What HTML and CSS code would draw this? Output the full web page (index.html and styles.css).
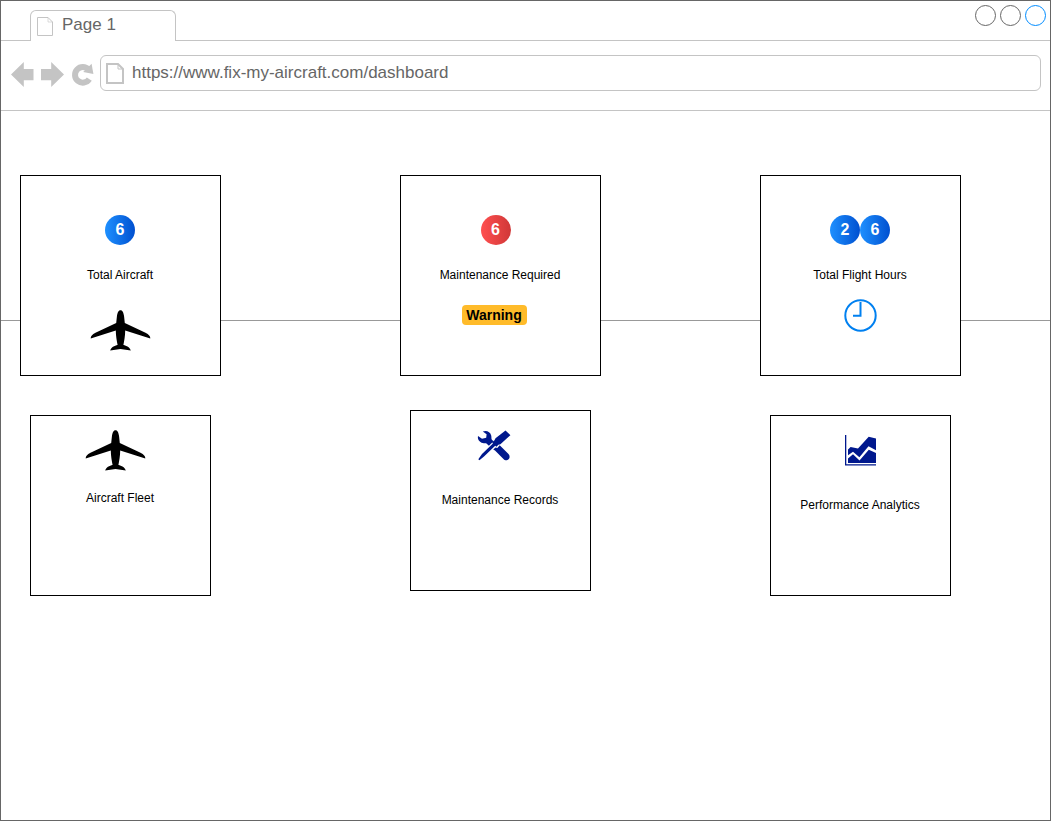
FILE: index.html
```html
<!DOCTYPE html>
<html lang="en">
<head>
<meta charset="utf-8">
<title>Page 1</title>
<link rel="stylesheet" href="styles.css">
</head>
<body>
<svg class="defs" width="0" height="0">
  <symbol id="plane" viewBox="-.5 0 61 41">
    <path d="M30 .3C32.2 .3 33 2.8 33.6 6.5L34.3 13L55 22.8Q60 25.3 59.8 28.4L34.7 20.4C34.7 26 33.6 31 32.9 35C36 35.5 39.5 37.5 40.3 40.5L30 39L19.7 40.5C20.5 37.5 24 35.5 27.1 35C26.4 31 25.3 26 25.3 20.4L.2 28.4Q0 25.3 5 22.8L25.7 13L26.4 6.5C27 2.8 27.8 .3 30 .3Z"/>
  </symbol>
</svg>
<div class="browser">
  <header class="tabs">
    <div class="tab">
      <svg class="tab-icon" width="16" height="19" viewBox="0 0 16 19" fill="none" stroke="#c4c4c4"><path d="M.5.5H11L15.5 5V18.5H.5Z"/><path d="M11 .5V5H15.5" stroke-opacity=".6"/></svg>
      <span>Page 1</span>
    </div>
    <div class="controls"><i class="dot"></i><i class="dot"></i><i class="dot active"></i></div>
  </header>
  <nav class="toolbar">
    <svg class="nav-icons" width="84" height="26" viewBox="0 0 84 26" fill="#c4c4c4">
      <path d="M0 13.5L12.8 1V8H22.5V19.3H12.8V26Z"/>
      <path d="M53 13.5L40.2 1V8H30V19.3H40.2V26Z"/>
      <path d="M78.3 18.2A7.8 7.8 0 1 1 77.6 8.6" fill="none" stroke="#c4c4c4" stroke-width="6"/>
      <path d="M80.6 2.8L82.4 12.9L72.2 11Z"/>
    </svg>
    <div class="address">
      <svg width="18" height="21" viewBox="0 0 18 21" fill="none" stroke="#c4c4c4" stroke-width="2"><path d="M1 1H12L17 6V20H1Z"/><path d="M12 1V6H17" stroke-width="1"/></svg>
      <span>https://www.fix-my-aircraft.com/dashboard</span>
    </div>
  </nav>
  <main class="content">
    <div class="rule"></div>
    <section class="row stats">
      <article class="card">
        <div class="badges"><b class="badge">6</b></div>
        <p>Total Aircraft</p>
        <svg class="plane" width="61" height="41"><use href="#plane"/></svg>
      </article>
      <article class="card">
        <div class="badges shift"><b class="badge red">6</b></div>
        <p>Maintenance Required</p>
        <b class="warning">Warning</b>
      </article>
      <article class="card">
        <div class="badges"><b class="badge">2</b><b class="badge">6</b></div>
        <p>Total Flight Hours</p>
        <svg class="clock" width="35" height="35" viewBox="-.5 -.5 35 35" fill="none" stroke="#0080f0" stroke-width="2"><circle cx="17" cy="17" r="15.2"/><path d="M17 3.5V17.2H9.5"/></svg>
      </article>
    </section>
    <section class="row links">
      <article class="card fleet">
        <svg width="61" height="41"><use href="#plane"/></svg>
        <p>Aircraft Fleet</p>
      </article>
      <article class="card records">
        <svg width="34" height="31" viewBox="0 0 34 31" fill="#00188d">
          <path d="M5.8 1.5C9.5 0 13.3 1.8 14.2 5.4C14.6 7.2 14.2 8.8 14.9 9.8L16.5 11.3L11.9 15.8L10 13.9C8.8 12.8 7.5 13.7 5.8 13C2.4 12 .3 9.5 1 5.9L5 8.8L9.2 7.8L9.6 4.2Z"/>
          <path d="M28.5.4L33.4 5.2L23.4 14.2L21.4 14.8L19.5 16.8L18.2 15.8L7 26.5L2.4 30.3L1.3 29.2L5 24L15.9 13.4L15.1 12.2L17.5 10.2L18.5 8.2Z"/>
          <path d="M16.2 19.5L18.6 17.4L20.3 18L22.7 15.3L31.5 24.1C33.6 26.4 32.5 29.8 29.8 30.3C28.5 30.5 27.4 30 26.7 29.2L18 20.6Z"/>
        </svg>
        <p>Maintenance Records</p>
      </article>
      <article class="card analytics">
        <svg width="31" height="31" viewBox="0 0 31 31" fill="#00188d">
          <path d="M0 0H1.3V29.3H31V30.6H0Z"/>
          <path d="M3 14.6L5.6 12L13 13.4L23.7 1.8L31 3.4V15.3L23.5 11.2L14.4 22.2L8 16.8L3 20.3Z"/>
          <path d="M3 23.4L8 19.2L14.5 25.5L23.8 14.7L31 18V28H3Z"/>
        </svg>
        <p>Performance Analytics</p>
      </article>
    </section>
  </main>
</div>
</body>
</html>
```

FILE: styles.css
```css
* { box-sizing: border-box; }
body { margin: 0; background: #fff; font-family: "Liberation Sans", Arial, sans-serif; }
svg { display: block; flex: none; }
p { margin: 0; }
.defs { position: absolute; }
.browser { width: 1051px; height: 821px; border: 1px solid #666; overflow: hidden; }
.tabs { height: 40px; border-bottom: 1px solid #c4c4c4; display: flex; justify-content: space-between; padding: 9px 4px 0 29px; }
.tab { width: 146px; height: 31px; border: 1px solid #c4c4c4; border-bottom: 0; border-radius: 6px 6px 0 0; background: #fff; display: flex; padding: 0 0 0 6px; color: #666; font-size: 17px; line-height: 27px; gap: 9px; }
.tab-icon { margin-top: 6px; }
.controls { display: flex; gap: 4px; margin-top: -5px; }
.dot { width: 21px; height: 21px; border: 1px solid #666; border-radius: 50%; }
.dot.active { border-color: #008cff; }
.toolbar { height: 70px; border-bottom: 1px solid #c4c4c4; display: flex; padding: 14px 9px 0 10px; }
.nav-icons { margin: 6px 5px 0 0; }
.address { flex: 1; height: 36px; border: 1px solid #c4c4c4; border-radius: 6px; display: flex; padding: 7px 0 0 5px; gap: 8px; color: #666; font-size: 17px; line-height: 20px; }
.content { position: relative; padding: 64px 0 0 19px; }
.rule { position: absolute; left: 0; right: 0; top: 209px; height: 1px; background: #999; }
.row { position: relative; display: grid; grid-template-columns: 380px 360px 201px; align-items: start; }
.card { border: 1px solid #000; background: #fff; display: flex; flex-direction: column; align-items: center; padding-right: 1px; font-size: 12px; line-height: 14px; color: #000; }
.stats .card { width: 201px; height: 201px; padding-top: 39px; }
.badges { display: flex; height: 31px; margin-bottom: 22px; }
.badges.shift { margin-right: 9px; }
.badge { width: 30px; height: 30px; border-radius: 50%; background: linear-gradient(90deg, #1e90ff, #0050d0); color: #fff; font-size: 16px; line-height: 30px; text-align: center; }
.badge.red { background: linear-gradient(90deg, #ff5050, #d03737); }
.plane { margin: 28px -1px 0 0; }
.warning { margin: 23px 12px 0 0; width: 65px; height: 20px; border-radius: 4px; background: #ffbb2a; font-size: 14px; line-height: 20px; text-align: center; }
.clock { margin: 16px -1px 0 0; }
.links { margin-top: 34px; }
.links .card { width: 181px; height: 181px; margin-left: 10px; }
.links .fleet { margin-top: 5px; padding-top: 14px; }
.fleet svg { margin-right: 9px; }
.fleet p { margin: 20px 0 0; }
.records { padding-top: 19px; }
.records svg { margin-right: 12px; }
.records p { margin-top: 32px; }
.links .analytics { margin-top: 5px; padding-top: 19px; }
.analytics p { margin-top: 32px; }
```
